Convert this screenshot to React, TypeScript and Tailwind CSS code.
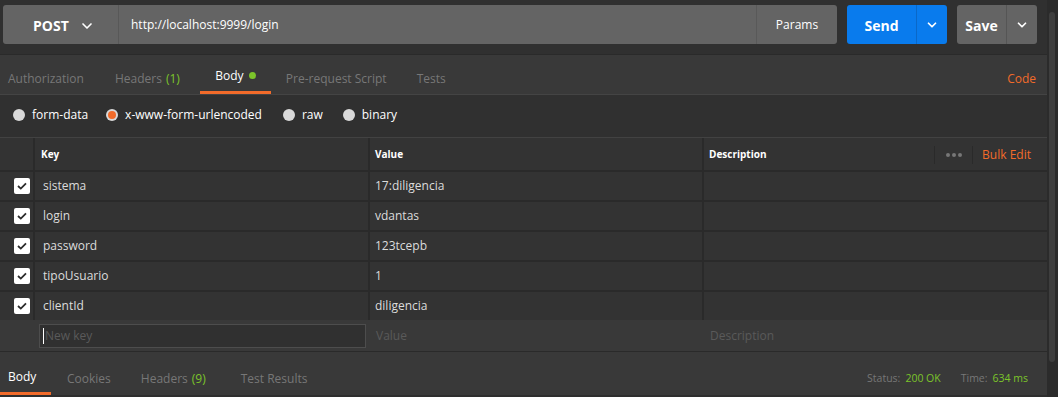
import { ChevronDown } from "lucide-react";

type Row = { key: string; value: string };

const rows: Row[] = [
  { key: "sistema", value: "17:diligencia" },
  { key: "login", value: "vdantas" },
  { key: "password", value: "123tcepb" },
  { key: "tipoUsuario", value: "1" },
  { key: "clientId", value: "diligencia" },
];

function Check() {
  return (
    <div className="w-4 h-4 rounded-[2px] bg-white flex items-center justify-center">
      <svg width="10" height="8" viewBox="0 0 10 8">
        <path d="M1 4 L3.8 6.6 L9 1.4" stroke="#2b2b2b" strokeWidth="1.8" fill="none" />
      </svg>
    </div>
  );
}

function Radio({ on }: { on?: boolean }) {
  return (
    <span className="w-[12px] h-[12px] rounded-full bg-[#d9d9d9] flex items-center justify-center">
      {on && <span className="w-[8px] h-[8px] rounded-full bg-[#f26b2a]" />}
    </span>
  );
}

export default function App() {
  return (
    <div className="w-[1058px] h-[397px] flex bg-[#2b2b2b] text-[12px] text-[#dcdcdc] font-['Open_Sans',sans-serif] overflow-hidden">
      <div className="w-[1047px] flex flex-col">
        {/* request bar */}
        <div className="h-[55px] bg-[#303030] flex items-start pt-[5px] pl-[3px] border-b border-[#2a2a2a]">
          <div className="w-[834px] h-[39px] flex rounded-[3px] bg-[#646464] overflow-hidden">
            <div className="w-[116px] flex items-center pl-[30px] pt-[2px] gap-[10px] border-r border-[#585858]">
              <span className="text-[14px] font-bold text-white">POST</span>
              <ChevronDown size={16} strokeWidth={2.5} className="text-white" />
            </div>
            <div className="flex-1 flex items-center pl-[12px] pt-[1px] text-white">http://localhost:9999/login</div>
            <div className="w-[81px] flex items-center justify-center pt-[1px] border-l border-[#595959] text-white">Params</div>
          </div>
          <div className="ml-[10px] w-[100px] h-[39px] flex rounded-[3px] bg-[#097bed] overflow-hidden">
            <div className="w-[70px] flex items-center justify-center pt-[2px] text-[14px] font-bold text-white border-r border-[#0a68c8]">Send</div>
            <div className="flex-1 flex items-center justify-center">
              <ChevronDown size={14} strokeWidth={3} className="text-white" />
            </div>
          </div>
          <div className="ml-[10px] w-[80px] h-[39px] flex rounded-[3px] bg-[#646464] overflow-hidden">
            <div className="w-[50px] flex items-center justify-center pt-[2px] text-[14px] font-bold text-white border-r border-[#555]">Save</div>
            <div className="flex-1 flex items-center justify-center">
              <ChevronDown size={14} strokeWidth={3} className="text-white" />
            </div>
          </div>
        </div>

        {/* tabs */}
        <div className="h-[40px] bg-[#393939] flex items-stretch border-b border-[#444] text-[#777]">
          <div className="pl-[8px] pr-[31px] pt-[8px] flex items-center">Authorization</div>
          <div className="pt-[8px] flex items-center">
            Headers <span className="ml-[4px] text-[#7cc42a]">(1)</span>
          </div>
          <div className="ml-[20px] w-[71px] flex items-center justify-center gap-[5px] text-white border-b-[3px] border-[#f26b2a] pt-[5px]">
            Body <span className="w-[7px] h-[7px] rounded-full bg-[#7cc42a]" />
          </div>
          <div className="ml-[15px] pt-[8px] flex items-center">Pre-request Script</div>
          <div className="ml-[30px] pt-[8px] flex items-center">Tests</div>
          <div className="ml-auto pr-[11px] pt-[8px] flex items-center text-[#f26b2a]">Code</div>
        </div>

        {/* body types */}
        <div className="h-[42px] bg-[#303030] flex items-start pt-[11px] pl-[13px] gap-[5px] text-white">
          <div className="flex items-center gap-[7px]"><Radio /><span>form-data</span></div>
          <div className="ml-[13px] flex items-center gap-[7px]"><Radio on /><span>x-www-form-urlencoded</span></div>
          <div className="ml-[16px] flex items-center gap-[7px]"><Radio /><span>raw</span></div>
          <div className="ml-[15px] flex items-center gap-[7px]"><Radio /><span>binary</span></div>
        </div>

        {/* table */}
        <div className="bg-[#303030] flex-1 flex flex-col">
          <div className="grid grid-cols-[33px_333px_332px_1fr] gap-[2px] bg-[#2a2a2a] border-t border-[#424242]">
            <div className="h-[32px] bg-[#333]" />
            <div className="h-[32px] bg-[#333] flex items-center pl-[6px] pt-[1px] text-[10px] font-bold text-white">Key</div>
            <div className="h-[32px] bg-[#333] flex items-center pl-[5px] pt-[1px] text-[10px] font-bold text-white">Value</div>
            <div className="h-[32px] bg-[#333] flex items-center pl-[5px] pt-[1px] text-[10px] font-bold text-white">
              <span>Description</span>
              <span className="ml-auto h-[18px] border-l border-[#2a2a2a] w-[38px] flex items-center justify-center gap-[2px]">
                <span className="w-[4px] h-[4px] rounded-full bg-[#777]" />
                <span className="w-[4px] h-[4px] rounded-full bg-[#777]" />
                <span className="w-[4px] h-[4px] rounded-full bg-[#777]" />
              </span>
              <span className="h-[18px] border-l border-[#2a2a2a] pl-[9px] pr-[16px] flex items-center text-[12px] font-normal text-[#f26b2a]">Bulk Edit</span>
            </div>
            {rows.map((r) => (
              <div key={r.key} className="contents">
                <div className="h-[28px] bg-[#333] flex items-center pl-[14px]"><Check /></div>
                <div className="h-[28px] bg-[#333] flex items-center pl-[8px]">{r.key}</div>
                <div className="h-[28px] bg-[#333] flex items-center pl-[5px]">{r.value}</div>
                <div className="h-[28px] bg-[#333]" />
              </div>
            ))}
          </div>
          <div className="h-[32px] bg-[#393939] grid grid-cols-[33px_333px_332px_1fr] gap-[2px] items-center border-b border-[#2a2a2a]">
            <div />
            <div className="h-[24px] ml-[4px] mr-[2px] border border-[#4d4d4d] bg-[#303030] flex items-center pl-[3px] text-[#5a5a5a]">
              <span className="w-px h-[16px] bg-white mr-[1px]" />New key
            </div>
            <div className="pl-[6px] text-[#5a5a5a]">Value</div>
            <div className="pl-[6px] text-[#5a5a5a]">Description</div>
          </div>
        </div>

        {/* response tabs */}
        <div className="h-[45px] bg-[#393939] flex items-stretch border-b-[2px] border-[#2e2e2e] text-[#777]">
          <div className="w-[51px] flex items-center pl-[8px] text-white border-b-[3px] border-[#f26b2a] pt-[9px]">Body</div>
          <div className="ml-[16px] pt-[10px] flex items-center">Cookies</div>
          <div className="ml-[30px] pt-[10px] flex items-center">
            Headers <span className="ml-[4px] text-[#7cc42a]">(9)</span>
          </div>
          <div className="ml-[35px] pt-[10px] flex items-center">Test Results</div>
          <div className="ml-auto pr-[19px] pt-[10px] flex items-center text-[10.5px]">
            Status: <span className="ml-[5px] text-[#7cc42a]">200 OK</span>
            <span className="ml-[20px]">Time:</span> <span className="ml-[5px] text-[#7cc42a]">634 ms</span>
          </div>
        </div>
      </div>
      <div className="flex-1 bg-[#2b2b2b] pt-[12px] pl-[2px]">
        <div className="w-[6px] h-[350px] rounded-full bg-[#3e3e3e]" />
      </div>
    </div>
  );
}
